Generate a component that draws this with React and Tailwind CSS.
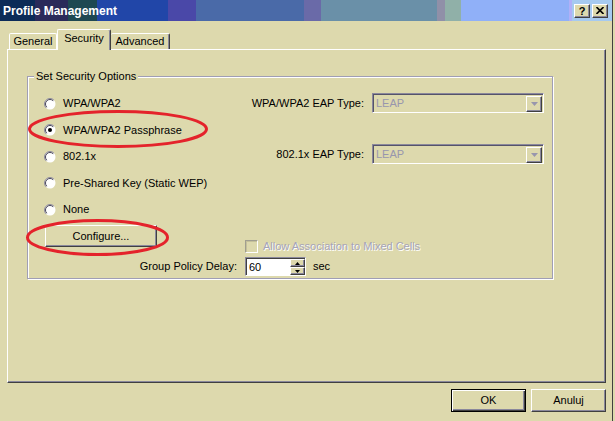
import React from "react";

const raised =
  "border border-white border-b-[#404040] border-r-[#404040] shadow-[inset_-1px_-1px_0_#8a889c] bg-[#ddd9ad]";

function Radio({ checked }) {
  return (
    <svg width="12" height="12" viewBox="0 0 12 12" className="shrink-0">
      <circle cx="6" cy="6" r="5.5" fill="#fff" />
      <path d="M2.1 9.9 A5.5 5.5 0 0 1 9.9 2.1" fill="none" stroke="#8d8b9d" />
      <path d="M2.8 9.2 A4.5 4.5 0 0 1 9.2 2.8" fill="none" stroke="#4a4858" />
      {checked && <circle cx="6" cy="6" r="2" fill="#000" />}
    </svg>
  );
}

function Option({ label, checked, h }) {
  return (
    <div className={`flex items-center ${h}`}>
      <Radio checked={checked} />
      <span className="ml-[7px]">{label}</span>
    </div>
  );
}

function EapSelect({ label }) {
  return (
    <div className="flex items-center justify-end">
      <span className="mr-[8px]">{label}</span>
      <div className="flex h-[20px] w-[172px] items-center border border-[#8a889c] border-b-white border-r-white pl-[1px] pt-[1px] shadow-[inset_1px_1px_0_#55536a]">
        <span className="flex-1 pl-[2px] text-[#9896ad]">LEAP</span>
        <div className={`mr-[1px] flex h-[16px] w-[16px] items-center justify-center ${raised}`}>
          <svg width="7" height="4" viewBox="0 0 7 4">
            <polygon points="0,0 7,0 3.5,4" fill="#9896ad" />
          </svg>
        </div>
      </div>
    </div>
  );
}

function SpinBtn({ up }) {
  return (
    <div className={`flex h-[8px] w-[15px] items-center justify-center ${raised}`}>
      <svg width="5" height="3" viewBox="0 0 5 3">
        <polygon points={up ? "0,3 5,3 2.5,0" : "0,0 5,0 2.5,3"} fill="#000" />
      </svg>
    </div>
  );
}

const App = () => {
  return (
    <div className="relative h-[421px] w-[615px] overflow-hidden bg-[#ddd9ad] font-['Liberation_Sans',Arial,sans-serif] text-[11px] leading-[13px] text-black">
      <div className="h-full w-[613px] border-r border-[#404040]">
        {/* title bar */}
        <div className="flex h-[21px] items-center justify-between bg-[linear-gradient(90deg,#0c2b58_0_35px,#2a2a5a_35px_68px,#1e4852_68px_97px,#2146a8_97px_168px,#4a48a8_168px_196px,#4a6aa8_196px_304px,#6a6aa8_304px_321px,#6a90a8_321px_437px,#9090a8_437px_445px,#90b0a8_445px_461px,#90b0f8_461px_569px,#b0b0f8_569px_572px,#a6caf0_572px)] pl-[3px] pr-[4px]">
          <span className="text-[12px] font-bold leading-[14px] text-white">
            Profile Management
          </span>
          <div className="flex gap-[2px]">
            <div className={`flex h-[14px] w-[16px] items-center justify-center text-[11px] font-bold leading-[12px] ${raised}`}>
              ?
            </div>
            <div className={`flex h-[14px] w-[16px] items-center justify-center ${raised}`}>
              <svg width="8" height="7" viewBox="0 0 8 7">
                <path d="M0.5 0 L7.5 7 M7.5 0 L0.5 7" stroke="#000" strokeWidth="1.6" />
              </svg>
            </div>
          </div>
        </div>

        <div className="px-[7px] pt-[8px]">
          {/* tabs */}
          <div className="flex h-[20px] items-end pl-[2px]">
            <div className="flex h-[16px] w-[48px] items-center justify-center rounded-t-[2px] border border-b-0 border-white">
              General
            </div>
            <div className="relative z-10 mb-[-1px] flex h-[21px] w-[54px] items-center justify-center rounded-t-[2px] border border-b-0 border-white border-r-[#404040] bg-[#ddd9ad] pb-[3px] shadow-[inset_-1px_0_0_#8a889c]">
              Security
            </div>
            <div className="flex h-[16px] w-[59px] items-center justify-center rounded-t-[2px] border border-b-0 border-white border-l-0 border-r-[#404040] shadow-[inset_-1px_0_0_#8a889c]">
              Advanced
            </div>
          </div>

          {/* panel */}
          <div className="h-[334px] w-[599px] border border-white border-b-[#404040] border-r-[#404040] shadow-[inset_-1px_-1px_0_#8a889c]">
            <div className="relative ml-[19px] mt-[26px] w-[526px] border border-[#a09eb4] pl-[16px] pr-[8px] pt-[13px] pb-[2px] shadow-[inset_1px_1px_0_#fff,1px_1px_0_#fff]">
              <span className="absolute left-[6px] top-[-7px] bg-[#ddd9ad] px-[2px]">
                Set Security Options
              </span>

              <div className="flex">
                <div className="flex w-[201px] flex-col">
                  <Option h="h-[27px]" label="WPA/WPA2" />
                  <Option h="h-[26px]" label="WPA/WPA2 Passphrase" checked />
                  <Option h="h-[27px]" label="802.1x" />
                  <Option h="h-[26px]" label="Pre-Shared Key (Static WEP)" />
                  <Option h="h-[27px]" label="None" />
                </div>
                <div className="flex flex-1 flex-col gap-[31px] pt-[3px]">
                  <EapSelect label="WPA/WPA2 EAP Type:" />
                  <EapSelect label="802.1x EAP Type:" />
                </div>
              </div>

              <div className="flex h-[30px]">
                <div className="w-[201px] pt-[2px]">
                  <button
                    className={`ml-[1px] flex h-[22px] w-[112px] items-center justify-center ${raised}`}
                  >
                    Configure...
                  </button>
                </div>
                <div className="flex items-center pt-[16px]">
                  <div className="h-[13px] w-[13px] border border-[#a09e90] border-b-white border-r-white shadow-[inset_1px_1px_0_#c4c09a]" />
                  <span className="ml-[5px] text-[#a6a4b8] [text-shadow:1px_1px_0_#fff]">
                    Allow Association to Mixed Cells
                  </span>
                </div>
              </div>

              <div className="mt-[4px] flex h-[19px] items-center">
                <div className="w-[201px] pr-[8px] text-right">Group Policy Delay:</div>
                <div className="flex h-[19px] w-[61px] border border-[#8a889c] border-b-white border-r-white bg-white pl-[1px] pt-[1px] shadow-[inset_1px_1px_0_#404040]">
                  <div className="flex-1 pl-[2px] leading-[16px]">60</div>
                  <div className="flex flex-col">
                    <SpinBtn up />
                    <SpinBtn />
                  </div>
                </div>
                <span className="ml-[7px]">sec</span>
              </div>
            </div>
          </div>

          {/* dialog buttons */}
          <div className="mt-[6px] flex w-[599px] justify-end gap-[5px]">
            <button className="flex h-[23px] w-[75px] items-center justify-center border border-black bg-[#ddd9ad] shadow-[inset_1px_1px_0_#fff,inset_-1px_-1px_0_#404040,inset_-2px_-2px_0_#8a889c]">
              OK
            </button>
            <button className={`flex h-[23px] w-[75px] items-center justify-center ${raised}`}>
              Anuluj
            </button>
          </div>
        </div>
      </div>

      {/* red annotation marks */}
      <svg
        className="pointer-events-none absolute left-0 top-0"
        width="615"
        height="421"
        viewBox="0 0 615 421"
      >
        <ellipse cx="118" cy="129" rx="88.5" ry="17.5" fill="none" stroke="#e4232b" strokeWidth="3" />
        <ellipse cx="97.5" cy="237.5" rx="70" ry="17" fill="none" stroke="#e4232b" strokeWidth="3" />
      </svg>
    </div>
  );
};

export default App;
